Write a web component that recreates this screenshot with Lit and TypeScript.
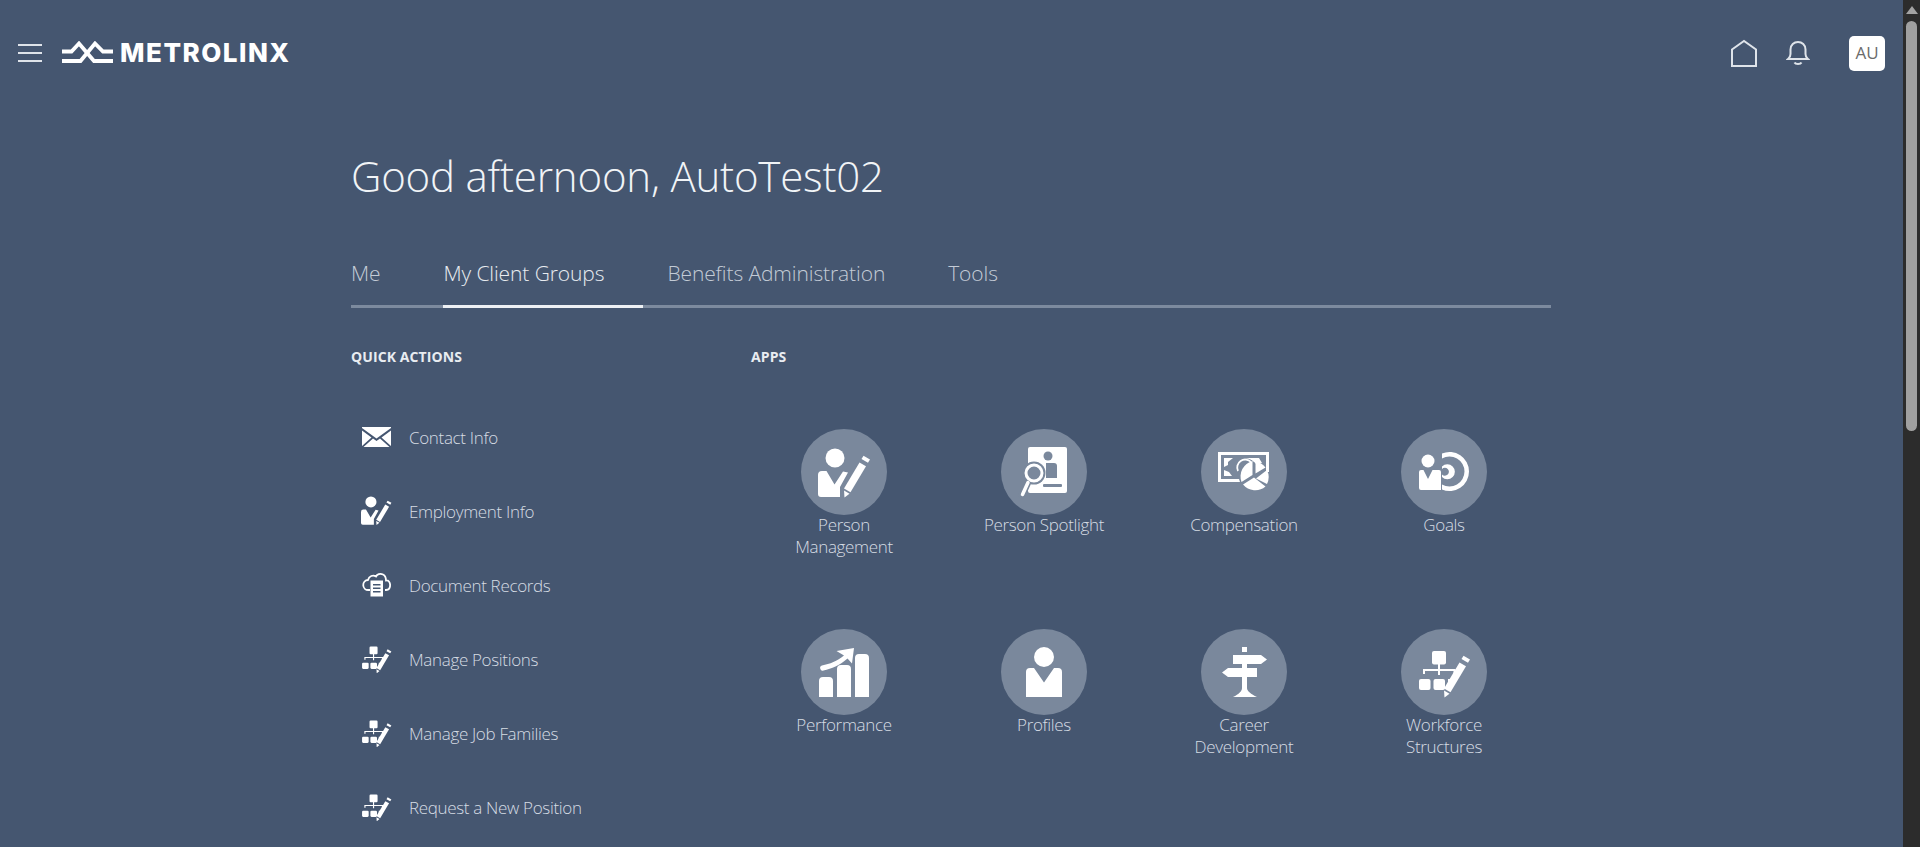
import { LitElement, html, css, svg } from "lit";
import { customElement, state } from "lit/decorators.js";

const TILE_GREY = "#7a889c";

const PENCIL = svg`
  <path d="M58.500 33.500l6.500 3.800-15.500 26-6.500-3.800z"/>
  <path d="M43 61.500l5.500 3.200-5 3.800z"/>
  <path d="M60.500 30l2-3.200 6.500 3.800-2 3.200z"/>`;

const ORG = svg`
  <rect x="31" y="22" width="14" height="13.500" rx="2"/>
  <path d="M37 35h2v5h15.500v5h-2v-3H39v4h-2v-4H24v3h-2v-5h15z"/>
  <rect x="18" y="50" width="11.500" height="11" rx="2"/>
  <rect x="32.500" y="50" width="11.500" height="11" rx="2"/>
  <path d="M47 50h4l-4 8z"/>
  ${PENCIL}`;

const ICONS: Record<string, ReturnType<typeof svg>> = {
  person: svg`
    <circle cx="34" cy="29" r="9.500"/>
    <path d="M17 46a4 4 0 0 1 4-4h4.500l8 13.500L42 42.500l5 1L39 58v10H20a3 3 0 0 1-3-3z"/>
    ${PENCIL}`,
  org: ORG,
  spotlight: svg`
    <rect x="27" y="18" width="39" height="46" rx="2"/>
    <g fill="${TILE_GREY}">
      <circle cx="47" cy="27" r="4.500"/>
      <path d="M45 34h8a3 3 0 0 1 3 3v12H45z"/>
      <rect x="42" y="55" width="19" height="3" rx="1"/>
      <circle cx="33" cy="44" r="11.500"/>
    </g>
    <path stroke="${TILE_GREY}" stroke-width="7" stroke-linecap="round" d="M27 53l-6 13"/>
    <path fill-rule="evenodd" d="M33 34.500a9.500 9.500 0 1 1 0 19 9.500 9.500 0 0 1 0-19zm0 3a6.500 6.500 0 1 0 0 13 6.500 6.500 0 0 0 0-13z"/>
    <path stroke="currentColor" stroke-width="3.500" stroke-linecap="round" d="M27 53.500l-5.500 12"/>`,
  compensation: svg`
    <path fill-rule="evenodd" d="M17 23h51v20h-3V26H20v24h18l1 3H17z"/>
    <path d="M23 29h9l-5 4v3l-4 2zM23 41l5 2 3 4h-8zM40 29h18l3 5-6 1c-3-4-8-6-12-6z"/>
    <path fill="none" stroke="currentColor" stroke-width="1.800" d="M37 42a8 8 0 0 1 13-9"/>
    <path d="M51.500 32v14l-11 7a16 16 0 0 1 11-21zM54.500 32.500a16 16 0 0 1 10 6l-10 6zM66 41a16 16 0 0 1 0 14l-11-5.500zM64.500 57.500a16 16 0 0 1-22.500-2l11-7z"/>`,
  goals: svg`
    <circle cx="27" cy="32" r="6.500"/>
    <path d="M18 43a2 2 0 0 1 2-2h2.500l4.500 9 4.500-9H38a2 2 0 0 1 2 2v18H20a2 2 0 0 1-2-2z"/>
    <path fill-rule="evenodd" d="M41 24.500a19.500 19.500 0 1 1 0 36v-5a15 15 0 1 0 0-26z"/>
    <path fill-rule="evenodd" d="M41 37.500a7.500 7.500 0 1 1 0 10.500v-2.500a4 4 0 1 0 0-5.500z"/>`,
  performance: svg`
    <path d="M18 68V52a4 4 0 0 1 4-4h6a4 4 0 0 1 4 4v16zM36 68V40a4 4 0 0 1 4-4h6a4 4 0 0 1 4 4v28zM54 68V29a4 4 0 0 1 4-4h6a4 4 0 0 1 4 4v39z"/>
    <path d="M35.500 22L53 19l-2 15.500-4.500-5C38 37 31 39.500 22.500 41.500a2.500 2.500 0 0 1-1.500-5C29 35 36 32 43 26.500z"/>`,
  profile: svg`
    <circle cx="43" cy="28" r="10"/>
    <path d="M25 43a4 4 0 0 1 4-4h4l10 14.500L53 39h4a4 4 0 0 1 4 4v25H25z"/>`,
  career: svg`
    <rect x="41" y="18" width="5" height="5"/>
    <path d="M32 26h28l6 4.500-6 4.500H32zM56 39H27l-6 4.500 6 4.500h29z"/>
    <rect x="41" y="35" width="5" height="4"/>
    <path d="M41 48h5v11c0 3 4 6 10 9H32c6-3 9-6 9-9z"/>`,
};

const ENVELOPE = svg`<path d="M0 1l14.500 10.500L29 1v-1H0zM0 3.500V19l9.500-8.500zM29 3.500V19l-9.500-8.500zM1.500 20h26l-9.500-8.500-3.500 2.500-3.500-2.500z"/>`;

const CLOUD = svg`
  <path fill="none" stroke="currentColor" stroke-width="1.800" d="M8 18H6.500a5 5 0 0 1-.5-10c1-4 5-5.500 8-3.500 1-2 4-3.500 7-2 3 1.500 3 5 3 6 5-1 6 9 0 9.500h-1"/>
  <path fill-rule="evenodd" d="M8.500 8.500H21v16H8.500zM11 12v1.500h7.500V12zm0 3.500V17h7.500v-1.500zm0 3.500v1.500h7.500V19z"/>`;

const QUICK_ACTIONS = [
  { label: "Contact Info", icon: "mail" },
  { label: "Employment Info", icon: "person" },
  { label: "Document Records", icon: "cloud" },
  { label: "Manage Positions", icon: "org" },
  { label: "Manage Job Families", icon: "org" },
  { label: "Request a New Position", icon: "org" },
];

const APPS = [
  { label: "Person Management", icon: "person" },
  { label: "Person Spotlight", icon: "spotlight" },
  { label: "Compensation", icon: "compensation" },
  { label: "Goals", icon: "goals" },
  { label: "Performance", icon: "performance" },
  { label: "Profiles", icon: "profile" },
  { label: "Career Development", icon: "career" },
  { label: "Workforce Structures", icon: "org" },
];

const TABS = ["Me", "My Client Groups", "Benefits Administration", "Tools"];

@customElement("app-root")
export class AppRoot extends LitElement {
  @state() activeTab = 1;

  static styles = css`
    :host {
      display: flex;
      height: 847px;
      overflow: hidden;
      background: #455670;
      color: #e4e9ef;
      font-family: "Open Sans", "Noto Sans", sans-serif;
      font-weight: 300;
    }
    .page {
      flex: 1;
      min-width: 0;
    }
    .header {
      display: flex;
      align-items: center;
      height: 106px;
      padding: 0 18px;
    }
    .burger {
      display: flex;
      flex-direction: column;
      gap: 6px;
      width: 24px;
      margin-right: 20px;
    }
    .burger span {
      height: 2px;
      background: #dfe4ea;
    }
    .logo {
      display: flex;
      align-items: center;
      gap: 7px;
      padding-bottom: 2px;
      color: #fff;
      font-family: "Inter", sans-serif;
      font-weight: 800;
      font-size: 26px;
      letter-spacing: 1.500px;
    }
    .logo-mark {
      width: 51px;
      height: 22px;
    }
    .header-right {
      display: flex;
      align-items: center;
      margin-left: auto;
    }
    .home {
      width: 28px;
      height: 28px;
      margin-right: 28px;
      color: #dfe4ea;
    }
    .bell {
      width: 24px;
      height: 26px;
      margin-right: 39px;
      color: #dfe4ea;
    }
    .avatar {
      width: 36px;
      height: 35px;
      padding-bottom: 1px;
      box-sizing: border-box;
      display: flex;
      align-items: center;
      justify-content: center;
      background: #fff;
      border-radius: 5px;
      color: #6b6b6b;
      font-size: 17px;
      font-weight: 400;
    }
    .content {
      width: 1200px;
      margin-left: 351px;
    }
    h1 {
      margin: 0;
      padding-top: 45px;
      font-size: 42px;
      line-height: 50px;
      font-weight: 300;
      letter-spacing: -0.200px;
      color: #f1f4f7;
    }
    .tabs {
      display: flex;
      gap: 63px;
      margin-top: 49px;
      height: 55px;
      border-bottom: 3px solid #7c8a9e;
    }
    .tab {
      position: relative;
      font-size: 21px;
      line-height: 34px;
      padding-top: 6px;
      letter-spacing: -0.100px;
      color: #c3cbd6;
    }
    .tab.active {
      color: #e8ecf1;
    }
    .tab.active::after {
      content: "";
      position: absolute;
      left: 0;
      bottom: -3px;
      width: 200px;
      height: 3px;
      background: #edf0f4;
    }
    .columns {
      display: grid;
      grid-template-columns: 393px 1fr;
      padding-top: 39px;
    }
    h2 {
      margin: 0;
      font-size: 14px;
      line-height: 20px;
      font-weight: 700;
      letter-spacing: 0.100px;
      color: #e8ecf1;
    }
    .apps-title {
      padding-left: 7px;
    }
    .actions {
      display: flex;
      flex-direction: column;
      padding-top: 33px;
    }
    .action {
      display: flex;
      align-items: center;
      height: 74px;
      font-size: 17px;
      letter-spacing: -0.330px;
      color: #d6dce4;
    }
    .action-icon {
      display: flex;
      justify-content: center;
      width: 31px;
      margin: 0 17px 0 10px;
      color: #fff;
    }
    .apps {
      display: grid;
      grid-template-columns: repeat(4, 200px);
      grid-auto-rows: 200px;
      padding-top: 62px;
    }
    .app {
      display: flex;
      flex-direction: column;
      align-items: center;
      text-align: center;
      font-size: 17px;
      line-height: 22px;
      letter-spacing: -0.330px;
      color: #d6dce4;
    }
    .tile {
      width: 86px;
      height: 86px;
      margin-bottom: -1px;
      border-radius: 50%;
      background: #7a889c;
      color: #fff;
    }
    .app-label {
      width: 130px;
    }
    .scrollbar {
      display: flex;
      flex-direction: column;
      align-items: center;
      width: 17px;
      background: #2c2c2c;
    }
    .scroll-up {
      width: 0;
      height: 0;
      margin: 6px 0 7px;
      border-left: 6px solid transparent;
      border-right: 6px solid transparent;
      border-bottom: 8px solid #a3a3a3;
    }
    .thumb {
      width: 11px;
      height: 410px;
      background: #a0a0a0;
      border-radius: 6px;
    }
  `;

  private _actionIcon(name: string) {
    if (name === "mail") {
      return html`<svg width="29" height="20" viewBox="0 0 29 20" fill="currentColor">${ENVELOPE}</svg>`;
    }
    if (name === "cloud") {
      return html`<svg width="30" height="26" viewBox="0 0 30 26" fill="currentColor">${CLOUD}</svg>`;
    }
    if (name === "person") {
      return html`<svg width="31" height="30" viewBox="17 19 53 51" fill="currentColor">${ICONS.person}</svg>`;
    }
    return html`<svg width="30" height="27" viewBox="18 21 52 47" fill="currentColor">${ICONS[name]}</svg>`;
  }

  protected render() {
    return html`
      <div class="page">
        <header class="header">
          <div class="burger"><span></span><span></span><span></span></div>
          <div class="logo">
            <svg class="logo-mark" viewBox="0 0 51 22" fill="none" stroke="currentColor" stroke-width="3.800">
              <path d="M0 10.500h9.500l7.500-8 15 17.500h19" />
              <path d="M0 20h18.500L33 2.500l8 8h10" />
            </svg>
            <span>METROLINX</span>
          </div>
          <div class="header-right">
            <svg class="home" viewBox="0 0 28 28" fill="none" stroke="currentColor" stroke-width="2">
              <path d="M2 10.500L14 2l12 8.500V27H2z" />
            </svg>
            <svg class="bell" viewBox="0 0 24 26" fill="none" stroke="currentColor" stroke-width="2">
              <path d="M2 19h20c-1-1-2.500-2-2.500-5V9.500C19.500 5 16 2 12 2S4.500 5 4.500 9.500V14C4.500 17 3 18 2 19z" />
              <path d="M8.500 22.500c1 2 6 2 7 0" />
            </svg>
            <div class="avatar">AU</div>
          </div>
        </header>
        <main class="content">
          <h1>Good afternoon, AutoTest02</h1>
          <nav class="tabs">
            ${TABS.map(
              (tab, i) => html`<div class="tab ${i === this.activeTab ? "active" : ""}">${tab}</div>`
            )}
          </nav>
          <div class="columns">
            <section>
              <h2>QUICK ACTIONS</h2>
              <div class="actions">
                ${QUICK_ACTIONS.map(
                  (a) => html`
                    <div class="action">
                      <span class="action-icon">${this._actionIcon(a.icon)}</span>
                      <span>${a.label}</span>
                    </div>
                  `
                )}
              </div>
            </section>
            <section>
              <h2 class="apps-title">APPS</h2>
              <div class="apps">
                ${APPS.map(
                  (a) => html`
                    <div class="app">
                      <svg class="tile" viewBox="0 0 86 86" fill="currentColor">${ICONS[a.icon]}</svg>
                      <span class="app-label">${a.label}</span>
                    </div>
                  `
                )}
              </div>
            </section>
          </div>
        </main>
      </div>
      <div class="scrollbar">
        <div class="scroll-up"></div>
        <div class="thumb"></div>
      </div>
    `;
  }
}
